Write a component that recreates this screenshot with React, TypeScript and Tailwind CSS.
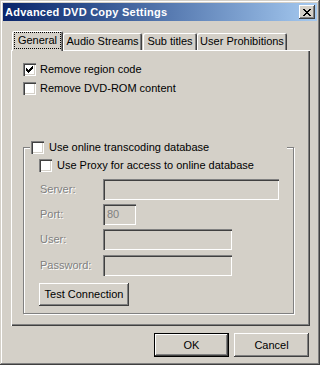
import React from 'react';

// Win2000 classic bevels
const raised =
  'shadow-[inset_-1px_-1px_#404040,inset_1px_1px_#ffffff,inset_-2px_-2px_#808080,inset_2px_2px_#d4d0c8]';
const sunken =
  'shadow-[inset_1px_1px_#808080,inset_2px_2px_#404040,inset_-1px_-1px_#ffffff,inset_-2px_-2px_#d4d0c8]';

const CheckBox: React.FC<{ checked?: boolean }> = ({ checked }) => (
  <span className={`flex h-[13px] w-[13px] shrink-0 items-center justify-center bg-white ${sunken}`}>
    {checked && (
      <svg width="7" height="7" viewBox="0 0 7 7" shapeRendering="crispEdges">
        <path
          fill="#000"
          d="M6 0h1v1h-1z M5 1h2v1h-2z M0 2h1v1h-1z M4 2h3v1h-3z M0 3h2v1h-2z M3 3h3v1h-3z M0 4h5v1h-5z M1 5h3v1h-3z M2 6h1v1h-1z"
        />
      </svg>
    )}
  </span>
);

const FieldRow: React.FC<{ label: string; width: string; value?: string; className?: string }> = ({
  label,
  width,
  value,
  className
}) => (
  <div className={`flex items-center ${className ?? ''}`}>
    <span className="w-[64px] pl-[1px] text-[#808080] [text-shadow:1px_1px_0_#ffffff]">{label}</span>
    <div className={`flex h-[21px] items-center bg-[#d4d0c8] pl-[4px] text-[#808080] ${width} ${sunken}`}>
      {value}
    </div>
  </div>
);

export default function App() {
  const tabs = [
    { label: 'Audio Streams', w: 'w-[79px] mr-[1px]' },
    { label: 'Sub titles', w: 'w-[54px]' },
    { label: 'User Prohibitions', w: 'w-[90px]' }
  ];

  return (
    <div
      className={`flex h-[365px] w-[320px] flex-col bg-[#d4d0c8] p-[3px] font-['Liberation_Sans',Arial,sans-serif] text-[11px] leading-[13px] text-black shadow-[inset_-1px_-1px_#404040,inset_1px_1px_#d4d0c8,inset_-2px_-2px_#808080,inset_2px_2px_#ffffff]`}
    >
      {/* Title bar */}
      <div className="flex h-[18px] items-center justify-between bg-linear-to-r from-[#0a246a] to-[#a6caf0] pl-[2px] pr-[2px]">
        <span className="text-[11px] font-bold tracking-[0.25px] text-white">Advanced DVD Copy Settings</span>
        <button className={`flex h-[14px] w-[16px] items-center justify-center bg-[#d4d0c8] ${raised}`}>
          <svg width="8" height="7" viewBox="0 0 8 7" shapeRendering="crispEdges">
            <path
              fill="#000"
              d="M0 0h2v1h-2z M6 0h2v1h-2z M1 1h2v1h-2z M5 1h2v1h-2z M2 2h4v1h-4z M3 3h2v1h-2z M2 4h4v1h-4z M1 5h2v1h-2z M5 5h2v1h-2z M0 6h2v1h-2z M6 6h2v1h-2z"
            />
          </svg>
        </button>
      </div>

      <div className="flex flex-col pl-[8px] pr-[7px] pt-[10px]">
        {/* Tabs */}
        <div className="flex h-[19px] items-end">
          <div className="relative z-10 -mb-[1px] ml-[1px] flex h-[20px] w-[51px] rounded-t-[2px] bg-[#d4d0c8] px-[2px] pb-[2px] pt-[1px] shadow-[inset_1px_1px_#ffffff,inset_-1px_0_#404040,inset_-2px_0_#808080]">
            <span className="flex flex-1 items-center justify-center outline-1 -outline-offset-1 outline-dotted outline-black">
              General
            </span>
          </div>
          {tabs.map((t) => (
            <div
              key={t.label}
              className={`flex h-[17px] items-center justify-center rounded-t-[2px] bg-[#d4d0c8] pb-[1px] shadow-[inset_1px_1px_#ffffff,inset_-1px_0_#404040,inset_-2px_0_#808080] ${t.w}`}
            >
              {t.label}
            </div>
          ))}
        </div>

        {/* Panel */}
        <div className="flex h-[276px] flex-col pl-[12px] pt-[13px] shadow-[inset_1px_1px_#ffffff,inset_-1px_-1px_#404040,inset_-2px_-2px_#808080]">
          <label className="flex items-center gap-[4px]">
            <CheckBox checked />
            <span>Remove region code</span>
          </label>
          <label className="mt-[6px] flex items-center gap-[4px]">
            <CheckBox />
            <span>Remove DVD-ROM content</span>
          </label>

          {/* Group box */}
          <div className="mt-[46px] flex flex-col">
            <div className="relative z-10 ml-[7px] flex w-[257px] items-center gap-[5px] bg-[#d4d0c8] pl-[1px]">
              <CheckBox />
              <span>Use online transcoding database</span>
            </div>
            <div className="-mt-[7px] flex w-[271px] flex-col border border-[#808080] pb-[7px] pl-[15px] pt-[11px] shadow-[inset_1px_1px_#ffffff,1px_1px_#ffffff]">
              <label className="flex items-center gap-[5px]">
                <CheckBox />
                <span>Use Proxy for access to online database</span>
              </label>
              <FieldRow className="mt-[7px]" label="Server:" width="w-[176px]" />
              <FieldRow className="mt-[4px]" label="Port:" width="w-[33px]" value="80" />
              <FieldRow className="mt-[4px]" label="User:" width="w-[129px]" />
              <FieldRow className="mt-[5px]" label="Password:" width="w-[129px]" />
              <button className={`mt-[7px] h-[23px] w-[90px] bg-[#d4d0c8] ${raised}`}>Test Connection</button>
            </div>
          </div>
        </div>

        {/* Buttons */}
        <div className="mt-[7px] flex justify-end gap-[5px] pr-[1px]">
          <button className="h-[24px] w-[75px] border border-black bg-[#d4d0c8] shadow-[inset_-1px_-1px_#404040,inset_1px_1px_#ffffff,inset_-2px_-2px_#808080]">
            OK
          </button>
          <button className={`h-[24px] w-[75px] bg-[#d4d0c8] ${raised}`}>Cancel</button>
        </div>
      </div>
    </div>
  );
}
